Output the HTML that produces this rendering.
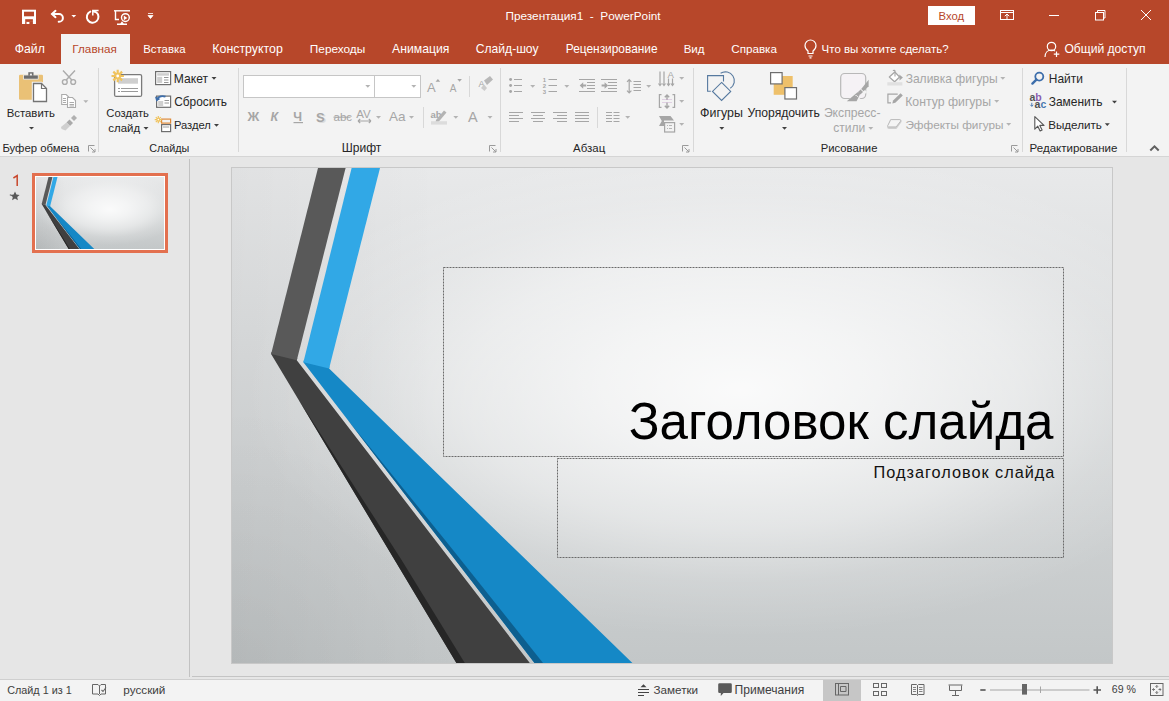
<!DOCTYPE html>
<html><head><meta charset="utf-8">
<style>
*{margin:0;padding:0;box-sizing:border-box}
html,body{width:1169px;height:701px;overflow:hidden;background:#e6e6e6;font-family:"Liberation Sans",sans-serif;font-size:12px;color:#262626}
.a{position:absolute;white-space:nowrap}
svg{position:absolute;left:0;top:0;overflow:visible}
</style></head><body>
<div class="a" style="left:0;top:0;width:1169px;height:64px;background:#b7472a"></div>
<div class="a" style="left:0;top:64px;width:1169px;height:92px;background:#f3f3f3"></div>
<div class="a" style="left:0;top:156px;width:1169px;height:1px;background:#d5d5d5"></div>
<div class="a" style="left:61px;top:34px;width:69px;height:30px;background:#f3f3f3"></div>
<div class="a" style="left:0;top:679px;width:1169px;height:1px;background:#cfcfcf"></div>
<div class="a" style="left:0;top:680px;width:1169px;height:21px;background:#f3f3f3"></div>
<div class="a" style="left:823px;top:680px;width:38px;height:21px;background:#c6c6c6"></div>
<div class="a" style="left:189px;top:159px;width:1px;height:518px;background:#c2c2c2"></div>
<div class="a" style="left:928px;top:6px;width:47px;height:19px;background:#fff"></div>
<div class="a" style="left:243px;top:75px;width:132px;height:23px;background:#fff;border:1px solid #c6c6c6"></div>
<div class="a" style="left:374px;top:75px;width:47px;height:23px;background:#fff;border:1px solid #c6c6c6"></div>
<div class="a" style="left:192px;top:676px;width:977px;height:1px;background:#c4c4c4"></div>
<svg width="1169" height="701" viewBox="0 0 1169 701">
  <defs>
    <linearGradient id="bg" gradientUnits="userSpaceOnUse" x1="0" y1="168" x2="0" y2="663">
      <stop offset="0" stop-color="#e8e9ea"/>
      <stop offset="1" stop-color="#c3c7c8"/>
    </linearGradient>
    <linearGradient id="vl" gradientUnits="userSpaceOnUse" x1="232" y1="0" x2="440" y2="0">
      <stop offset="0" stop-color="#000" stop-opacity="0.035"/>
      <stop offset="1" stop-color="#000" stop-opacity="0"/>
    </linearGradient>
    <radialGradient id="vb" gradientUnits="userSpaceOnUse" cx="232" cy="663" r="260">
      <stop offset="0" stop-color="#000" stop-opacity="0.045"/>
      <stop offset="1" stop-color="#000" stop-opacity="0"/>
    </radialGradient>
    <radialGradient id="hl" gradientUnits="userSpaceOnUse" cx="740" cy="390" r="550" gradientTransform="translate(740 390) scale(1 0.5) translate(-740 -390)">
      <stop offset="0" stop-color="#fff" stop-opacity="0.88"/>
      <stop offset="0.25" stop-color="#fff" stop-opacity="0.7"/>
      <stop offset="0.5" stop-color="#fff" stop-opacity="0.45"/>
      <stop offset="0.7" stop-color="#fff" stop-opacity="0.15"/>
      <stop offset="0.9" stop-color="#fff" stop-opacity="0"/>
    </radialGradient>
    <g id="sl">
      <rect x="232" y="168" width="880" height="495" fill="url(#bg)"/>
      <rect x="232" y="168" width="880" height="495" fill="url(#vl)"/>
      <rect x="232" y="168" width="880" height="495" fill="url(#vb)"/>
      <rect x="232" y="168" width="880" height="495" fill="url(#hl)"/>
      
      <polygon points="271.6,351.9 297.3,358.2 296.8,360.2 529.8,663 456.4,663 271.1,353.9" fill="#404040"/>
      <polygon points="298.8,400 401.6,560 464.8,663 456.4,663" fill="#262626"/>
      <polygon points="318,168 345.6,168 296.8,360.2 271.1,353.9" fill="#595959"/>
      <polygon points="303.9,360.2 329.6,366.5 329.1,368.5 632.4,663 534.5,663 303.4,362.2" fill="#1588c6"/>
      <polygon points="347.8,420 445,540 543,663 534.5,663" fill="#0d5f8f"/>
      <polygon points="351.6,168 380,168 329.1,368.5 303.4,362.2" fill="#31a8e6"/>
    </g>
  </defs>
  <rect x="231" y="167" width="882" height="497" fill="#c8c8c8"/>
  <use href="#sl"/>
  <g fill="none" stroke="#6a6a6a" stroke-width="1" stroke-dasharray="2 1">
    <rect x="443.5" y="267.5" width="620" height="189"/>
    <rect x="557.5" y="458.5" width="506" height="99"/>
  </g>
  <!-- thumbnail -->
  <rect x="33.5" y="174.5" width="133" height="77" fill="none" stroke="#e3704f" stroke-width="3"/>
  <rect x="35.5" y="176.5" width="129" height="73" fill="none" stroke="#fff" stroke-width="1"/>
  <use href="#sl" transform="translate(36 177) scale(0.145454) translate(-232 -168)"/>
</svg>
<svg width="1169" height="701" viewBox="0 0 1169 701">
<!-- ===== Title bar QAT ===== -->
<rect x="22" y="9.7" width="14" height="14.3" fill="#fff"/>
<rect x="24" y="11.7" width="10" height="4.6" fill="#b7472a"/>
<rect x="25.2" y="19.2" width="7.7" height="2.7" fill="#b7472a"/>
<rect x="25.2" y="21.9" width="1.3" height="2.1" fill="#b7472a"/>
<rect x="29.4" y="21.9" width="3.5" height="2.1" fill="#b7472a"/>
<g fill="none" stroke="#fff" stroke-width="2" stroke-linecap="round">
  <path d="M52.5 14h6.5a3.9 3.9 0 0 1 0 7.8h-0.3"/>
  <path d="M55.5 10.8 52 14 55.5 17.2"/>
  <path d="M90.3 11.6A5.8 5.8 0 1 0 96.2 12.3L93.4 11.2"/>
</g>
<path d="M71.4 15h4.8l-2.4 2.6z" fill="#fff"/>
<g fill="none" stroke="#fff" stroke-width="1.4">
  <path d="M114 10.8h16"/>
  <path d="M115.5 11v8.5h3.5"/>
  <circle cx="125.4" cy="17.6" r="3.9"/>
  <path d="M117 24.3h10M120.5 24.3l1.5-2 1.5 2"/>
</g>
<path d="M123.8 15.6v4.6l3.5-2.3z" fill="#fff"/>
<path d="M98.6 10.6H92.8V15.4" fill="none" stroke="#fff" stroke-width="1.5"/>
<path d="M148 13.5h5M148 15.5h5l-2.5 3z" fill="#fff" stroke="#fff" stroke-width="0.8"/>
<!-- window controls -->
<g fill="none" stroke="#fff" stroke-width="1">
  <rect x="1000.5" y="10.5" width="13" height="9"/>
  <path d="M1000.5 12.5h13"/>
  <path d="M1007 19.5v-5.5M1004.8 16.2l2.2-2.2 2.2 2.2"/>
  <path d="M1049 15.5h10"/>
  <rect x="1095.5" y="12.5" width="8" height="7.5"/>
  <path d="M1097.5 12.5v-2h7.5v7.5h-1.5"/>
  <path d="M1141 10l10 10M1151 10l-10 10"/>
</g>
<!-- bulb -->
<g fill="none" stroke="#fff" stroke-width="1.2">
  <path d="M808 53.5v-2.5c-1.8-1.3-3-3.3-3-5.5a5.5 5.5 0 0 1 11 0c0 2.2-1.2 4.2-3 5.5v2.5z"/>
  <path d="M808.5 56h4M809.5 57.8h2"/>
</g>
<!-- person -->
<g fill="none" stroke="#fff" stroke-width="1.2">
  <circle cx="1051.5" cy="46.5" r="4.2"/>
  <path d="M1045 57c0-4.5 2.8-7 6.5-7 1.4 0 2.6 .4 3.5 1"/>
  <path d="M1056.5 51.5v5.5M1053.8 54.2h5.5"/>
</g>

<!-- ===== Ribbon separators ===== -->
<g fill="#d8d8d8">
  <rect x="98" y="68" width="1" height="84"/>
  <rect x="238" y="68" width="1" height="84"/>
  <rect x="500" y="68" width="1" height="84"/>
  <rect x="693" y="68" width="1" height="84"/>
  <rect x="1022" y="68" width="1" height="84"/>
  <rect x="1126" y="68" width="1" height="84"/>
  <rect x="469" y="76" width="1" height="21"/>
  <rect x="423" y="107" width="1" height="21"/>
  <rect x="597" y="107" width="1" height="21"/>
</g>
<!-- dropdown arrows (dark) -->
<g fill="#404040">
  <path d="M29 127h5l-2.5 2.6z"/>
  <path d="M143.5 127h5l-2.5 2.8z"/>
  <path d="M211.5 77h5l-2.5 2.8z"/>
  <path d="M214 124h5l-2.5 2.8z"/>
  <path d="M719.3 127h5l-2.5 2.8z"/>
  <path d="M782 127h5l-2.5 2.8z"/>
  <path d="M1112 100.8h5l-2.5 2.6z"/>
  <path d="M1104.8 123.3h5l-2.5 2.6z"/>
</g>
<!-- dropdown arrows (disabled) -->
<g fill="#b3b3b3">
  <path d="M83.3 100.3h5l-2.5 2.8z"/>
  <path d="M365.3 85h5l-2.5 2.8z"/>
  <path d="M411.3 85h5l-2.5 2.8z"/>
  <path d="M376 116h5l-2.5 2.8z"/>
  <path d="M409 116h5l-2.5 2.8z"/>
  <path d="M453.3 116h5l-2.5 2.8z"/>
  <path d="M487.5 116h5l-2.5 2.8z"/>
  <path d="M530.2 85h5l-2.5 2.8z"/>
  <path d="M564.3 85h5l-2.5 2.8z"/>
  <path d="M646.2 85h5l-2.5 2.8z"/>
  <path d="M625.2 116h5l-2.5 2.8z"/>
  <path d="M679.2 77h5l-2.5 2.8z"/>
  <path d="M679.2 100h5l-2.5 2.8z"/>
  <path d="M679.2 123h5l-2.5 2.8z"/>
  <path d="M868.3 127h5l-2.5 2.8z"/>
  <path d="M1000.3 77h5l-2.5 2.8z"/>
  <path d="M994.2 100h5l-2.5 2.8z"/>
  <path d="M1006.2 123h5l-2.5 2.8z"/>
</g>
<!-- launchers -->
<g fill="none" stroke="#9a9a9a" stroke-width="1">
  <path d="M88.5 151.5v-6h6"/><path d="M90.5 147.5l4.5 4.5M95 149v3h-3"/>
  <path d="M489.5 151.5v-6h6"/><path d="M491.5 147.5l4.5 4.5M496 149v3h-3"/>
  <path d="M682.5 151.5v-6h6"/><path d="M684.5 147.5l4.5 4.5M689 149v3h-3"/>
  <path d="M1011.5 151.5v-6h6"/><path d="M1013.5 147.5l4.5 4.5M1018 149v3h-3"/>
</g>
<!-- collapse ^ -->
<path d="M1150.3 150.5l4.2-4.2 4.2 4.2" fill="none" stroke="#606060" stroke-width="2"/>

<!-- ===== Clipboard ===== -->
<rect x="19" y="74.8" width="24" height="25" rx="1.2" fill="#eac176"/>
<path d="M23.5 75h14.8v4.2H23.5z" fill="#6d6d6d" stroke="#f3f3f3" stroke-width="0.8"/>
<path d="M28.3 72.2h5.2v3.5h-5.2z" fill="#6d6d6d"/>
<rect x="29.9" y="73.6" width="2" height="1.8" fill="#f3f3f3"/>
<path d="M32.8 82.8h8.8l5.7 5.4v13.9H32.8z" fill="#fff" stroke="#f3f3f3" stroke-width="2"/>
<path d="M33.5 83.5h8l5 5v13H33.5z" fill="#fff" stroke="#737373" stroke-width="1.3"/>
<path d="M41.5 83.5v5h5" fill="none" stroke="#737373" stroke-width="1.2"/>
<!-- scissors -->
<g fill="none" stroke="#ababab" stroke-width="1.4">
  <circle cx="64.8" cy="82" r="2.4"/>
  <circle cx="73.2" cy="82" r="2.4"/>
  <path d="M66.2 80 75 70.5M71.8 80 63 70.5"/>
</g>
<!-- copy -->
<g fill="#fff" stroke="#ababab" stroke-width="1.1">
  <path d="M61.7 94.5h4.5l2.5 2.5v7.5h-7z"/>
  <path d="M67.5 97.5h5l3 3v7h-8z"/>
</g>
<g stroke="#ababab" stroke-width="1">
  <path d="M63 98.5h3M63 100.5h3M63 102.5h3M69.5 102.5h4.5M69.5 104.5h4.5M69.5 106h4.5"/>
</g>
<!-- format painter -->
<path d="M71 118l3-3 3 3-3 3z" fill="#b0b0b0"/>
<path d="M69.5 119.5l3.5 3.5-3 3-3.5-3.5z" fill="#aaaaaa"/>
<path d="M66.5 122.5l3.5 3.5-4.5 4.5-4-1.5-0.5-2z" fill="#cfcfcf"/>

<!-- ===== Slides ===== -->
<rect x="114.6" y="74.6" width="27" height="21.8" rx="1.5" fill="#fff" stroke="#7a7a7a" stroke-width="1.3"/>
<rect x="118" y="78.2" width="20" height="5.5" fill="#cfcfcf"/>
<g stroke="#9a9a9a" stroke-width="1"><path d="M118 88.5h2M121 88.5h17M118 91.5h2M121 91.5h17"/></g>
<g transform="translate(117.7 76)">
  <g stroke="#f0c35c" stroke-width="2.2" stroke-linecap="butt">
    <path d="M0 -6.2V6.2M-6.2 0H6.2M-4.4 -4.4L4.4 4.4M-4.4 4.4L4.4 -4.4"/>
  </g>
  <circle r="3" fill="#f0c35c"/>
  <circle r="1.4" fill="#fff"/>
</g>
<!-- layout -->
<rect x="155.6" y="71.6" width="15" height="13" fill="#fff" stroke="#6e6e6e" stroke-width="1.2"/>
<rect x="157.2" y="73.2" width="11.8" height="2.5" fill="#cfcfcf"/>
<rect x="157.2" y="76.8" width="5" height="6.2" fill="#cfcfcf"/>
<g stroke="#8a8a8a" stroke-width="0.9"><path d="M164 77.5h4.5M164 80h4.5M164 82.5h4.5"/></g>
<!-- reset -->
<rect x="156.6" y="96.1" width="14" height="11.2" fill="#fff" stroke="#6e6e6e" stroke-width="1.2"/>
<rect x="158.2" y="101" width="5" height="5" fill="#cfcfcf"/>
<g stroke="#8a8a8a" stroke-width="0.9"><path d="M164.5 100.5h4.5M164.5 103h4.5"/></g>
<path d="M157 99.5c1.5-3 5-4.2 8.5-2.8" fill="none" stroke="#3d6eab" stroke-width="1.8"/>
<path d="M155 96.5l1.3 5 4-2.5z" fill="#3d6eab"/>
<!-- section -->
<rect x="161.6" y="119.1" width="9" height="4" fill="none" stroke="#de8a3a" stroke-width="1.2"/>
<rect x="161.6" y="124.6" width="9" height="7" fill="#fff" stroke="#6e6e6e" stroke-width="1.2"/>
<rect x="163" y="126" width="6.2" height="2" fill="#cfcfcf"/>
<g transform="translate(158.3 119.6)">
  <g stroke="#f0c35c" stroke-width="1.2"><path d="M0 -3.6V3.6M-3.6 0H3.6M-2.5 -2.5L2.5 2.5M-2.5 2.5L2.5 -2.5"/></g>
  <circle r="1.6" fill="#f0c35c"/><circle r="0.8" fill="#fff"/>
</g>

<!-- ===== Font ===== -->

<g font-family="Liberation Sans" fill="#a6a6a6">
  <text x="247.5" y="121.2" font-size="13" font-weight="bold">Ж</text>
  <text x="270.5" y="121.2" font-size="12.5" font-weight="bold" font-style="italic">К</text>
  <text x="293.2" y="120.8" font-size="12.5" font-weight="bold">Ч</text>
  <text x="317.5" y="122.5" font-size="13" font-weight="bold" fill="#dcdcdc">S</text>
  <text x="316" y="121.5" font-size="13" font-weight="bold">S</text>
  <text x="333.5" y="121.2" font-size="11.5">abc</text>
  <text x="356.2" y="117.5" font-size="11.5">AV</text>
  <text x="389" y="121.2" font-size="13.5">Aa</text>
  <text x="427" y="91.6" font-size="13">A</text>
  <text x="449.8" y="91.6" font-size="10">A</text>
  <text x="468" y="121.8" font-size="14.5">A</text>
  <text x="478.5" y="87" font-size="9">A</text>
  <text x="430.5" y="117.5" font-size="9.5" font-weight="bold">ab</text>
</g>
<path d="M293.5 122.6h9.5" stroke="#a6a6a6" stroke-width="1.2"/>
<path d="M333.5 117.2h17" stroke="#a6a6a6" stroke-width="1"/>
<path d="M358 121h13M358 121l2.2-2M358 121l2.2 2M371 121l-2.2-2M371 121l-2.2 2" stroke="#a6a6a6" stroke-width="1.1" fill="none"/>
<path d="M435.6 81.7l2.3-2.7 2.3 2.7z" fill="#a6a6a6"/>
<path d="M457.3 79h4.6l-2.3 2.7z" fill="#a6a6a6"/>
<path d="M484 80.5l6-4.5 3 3.5-6 5.5z" fill="#b8b8b8"/>
<path d="M481 88l3-3.5 3 3.5-2.5 3z" fill="#cccccc"/>
<path d="M436 120l8-9.5 2.5 2-8 9.5-3 .8z" fill="#b3b3b3"/>
<rect x="431" y="121.2" width="16" height="3.4" fill="#dcdcdc"/>

<!-- ===== Paragraph ===== -->
<g fill="#a6a6a6">
  <circle cx="510.6" cy="79.5" r="1.45"/><circle cx="510.6" cy="85.5" r="1.45"/><circle cx="510.6" cy="91.5" r="1.45"/>
</g>
<g stroke="#a6a6a6" stroke-width="1" fill="none">
  <path d="M514 79.5h8M514 85.5h8M514 91.5h8"/>
  <path d="M548.5 79.5h8.5M548.5 85.5h8.5M548.5 91.5h8.5"/>
  <!-- decrease indent -->
  <path d="M579 79.5h16M587 82.5h8M587 85.5h8M587 88.5h8M579 91.5h16"/>
  <!-- increase indent -->
  <path d="M601 79.5h16M608 82.5h9M608 85.5h9M608 88.5h9M601 91.5h16"/>
  <!-- line spacing -->
  <path d="M633.5 81.5h7.5M633.5 84.5h7.5M633.5 87.5h7.5M633.5 90.5h7.5"/>
  <path d="M629.2 79.5v13.5M627 81.8l2.2-2.3 2.2 2.3M627 90.7l2.2 2.3 2.2-2.3" stroke-width="1.2"/>
  <!-- align -->
  <path d="M509 112.5h14M509 115.5h10M509 118.5h14M509 121.5h10"/>
  <path d="M531 112.5h14M533 115.5h10M531 118.5h14M533 121.5h10"/>
  <path d="M553 112.5h14M557 115.5h10M553 118.5h14M557 121.5h10"/>
  <path d="M575 112.5h14M575 115.5h14M575 118.5h14M575 121.5h14"/>
  <!-- columns -->
  <path d="M606 112.5h6M613.5 112.5h6M606 115.5h6M613.5 115.5h6M606 118.5h6M613.5 118.5h6M606 121.5h6M613.5 121.5h6"/>

</g>
<g font-family="Liberation Sans" fill="#a6a6a6" font-size="6" font-weight="bold">
  <text x="542.8" y="82">1</text><text x="542.8" y="88">2</text><text x="542.8" y="94">3</text>
</g>
<path d="M586.2 84.6h-3v-2.3l-3.5 3.2 3.5 3.2v-2.3h3z" fill="#a6a6a6"/>
<path d="M601.6 84.6h3v-2.3l3.5 3.2-3.5 3.2v-2.3h-3z" fill="#a6a6a6"/>

<!-- ===== Drawing ===== -->
<g fill="none" stroke="#56799f" stroke-width="1.1">
  <path d="M720.6 73.3A7.9 7.9 0 0 1 730.3 88.3"/>
  <path d="M710.8 91.3H707.6V75.6H723.5V81.6"/>
  <path d="M721.6 82.4L730.7 91.4L721.6 100.4L712.5 91.4Z"/>
</g>
<!-- arrange -->
<rect x="773.7" y="76" width="19" height="18.8" fill="#eec06a"/>
<rect x="770.6" y="72.6" width="11.5" height="11.3" fill="#fff" stroke="#6e6e6e" stroke-width="1.2"/>
<rect x="784.9" y="87.6" width="11.6" height="11.4" fill="#fff" stroke="#6e6e6e" stroke-width="1.2"/>
<!-- quick styles -->
<rect x="840.7" y="73.5" width="25" height="25" rx="4" fill="#f5f2f5" stroke="#b8b8b8" stroke-width="1.2"/>
<path d="M855 92.5l5.5 5.5-4 4h-9.5z" fill="#f3f3f3"/>
<path d="M863 88l4 4 -3 3-4-4z" fill="#f3f3f3"/>
<path d="M868.6 79.8v6.5l-5 5-2.4-2.4z" fill="#a6a6a6"/>
<path d="M860.6 89.5l2.4 2.4-2.6 2.6-2.4-2.4z" fill="#a6a6a6"/>
<path d="M857.2 92.6c1.4-.6 2.6 0 3 1.2l-3.6 7.5h-9.8z" fill="#a6a6a6"/>
<path d="M855.5 95.5c1-.2 2 .4 2.2 1.4" fill="none" stroke="#f3f3f3" stroke-width="1"/>
<!-- shape fill / outline / effects -->
<path d="M889.3 77l5.5-5 4.8 5-5 4.7z" fill="#fff" stroke="#a6a6a6" stroke-width="1.2" stroke-linejoin="round"/>
<path d="M895 76.5v-5.5c0-1-1.8-1-1.8 0" fill="none" stroke="#a6a6a6" stroke-width="1.1"/>
<path d="M899.3 74.6l3.6 2.8-3.3 3.1z" fill="#a6a6a6"/>
<rect x="887.3" y="82.2" width="15.1" height="3.3" fill="#e0e0e0"/>
<path d="M897.7 94.1H887.9V102.8H891" fill="none" stroke="#a6a6a6" stroke-width="1.2"/>
<path d="M892.3 103.6l0.8-3 7.5-7.3 2.2 2.2-7.5 7.3z" fill="#a6a6a6"/>
<path d="M891 119h8.5c1.5 0 2.5 1.5 2 3l-4.5 6.3c-.4.6-1 .8-1.6.8h-6.3c-1.5 0-2.3-1.4-1.8-2.5l2.6-6.5c.3-.7.7-1.1 1.1-1.1z" fill="#cfcfcf"/>
<path d="M891.2 119.6h8.2c1 0 1.5 1 1 1.8l-4.2 5.5h-7.8c-.6 0-1-.6-.7-1.2l2.6-5.1c.2-.6.5-1 .9-1z" fill="#f4f4f4" stroke="#b5b5b5" stroke-width="0.9"/>
<!-- ===== Editing ===== -->
<circle cx="1039.3" cy="76.6" r="4" fill="none" stroke="#3d6eab" stroke-width="1.8"/>
<path d="M1036.4 79.6l-4 4" stroke="#3d6eab" stroke-width="2.4" stroke-linecap="round"/>
<g font-family="Liberation Sans" font-size="10.5" font-weight="bold">
  <text x="1029.6" y="100.9" fill="#555555">a</text>
  <text x="1035.2" y="100.9" fill="#8a5cb0">b</text>
  <text x="1034.6" y="107.9" fill="#505050">a</text>
  <text x="1040.5" y="107.9" fill="#4a7ab0">c</text>
</g>
<path d="M1031.8 102.8v3.5M1030.3 104.8l1.5 1.5 1.5-1.5" fill="none" stroke="#3d6eab" stroke-width="0.9"/>
<path d="M1034.8 116.7v12.5l3-3 2.3 4.8 2-1-2.3-4.6h4.2z" fill="#fff" stroke="#555" stroke-width="1.1" stroke-linejoin="round"/>

<!-- ===== Status bar ===== -->
<g fill="none" stroke="#666" stroke-width="1">
  <path d="M92.5 684.5h5.5l1.5 1.5 1.5-1.5h4.5v9.5h-4.5l-1.5 1.5-1.5-1.5h-5.5z"/>
  <path d="M99.5 686v8"/>
  <path d="M101.5 690l1.5 1.5 3-4" stroke-width="1.1"/>
</g>
<g stroke="#444" stroke-width="1" fill="none">
  <path d="M638 689.5h11M638 692.5h11M638 695.5h6"/>
</g>
<path d="M640.5 687.3l3-3 3 3z" fill="#444"/>
<path d="M719.5 683.3h11a1.3 1.3 0 0 1 1.3 1.3v7.2a1.3 1.3 0 0 1-1.3 1.3h-7l-2.7 3v-3h-1.3a1.3 1.3 0 0 1-1.3-1.3v-7.2a1.3 1.3 0 0 1 1.3-1.3z" fill="#5a5a5a"/>
<g fill="none" stroke="#666" stroke-width="1">
  <rect x="835.5" y="683.5" width="13" height="11.5"/>
  <path d="M838.5 684v11M840.5 686.5h5.5v5h-5.5z"/>
  <rect x="873.5" y="683.5" width="5" height="4"/><rect x="881.5" y="683.5" width="5" height="4"/>
  <rect x="873.5" y="691.5" width="5" height="4"/><rect x="881.5" y="691.5" width="5" height="4"/>
  <path d="M911.5 684.5h5l1 1 1-1h5.5v10h-5.5l-1 1-1-1h-5z"/>
  <path d="M917.5 685.5v9"/>
  <path d="M913 687.5h3M913 689.5h3M913 691.5h3M919 687.5h3.5M919 689.5h3.5M919 691.5h3.5" stroke-width="0.8"/>
  <path d="M948.5 685h14M949.5 685.5v5h12v-5M955.5 690.5v5M952 695.5h7"/>
</g>
<rect x="980.3" y="689.2" width="5.3" height="1.6" fill="#555"/>
<rect x="990" y="689.5" width="99.5" height="1" fill="#a6a6a6"/>
<rect x="1040" y="686.5" width="1" height="6.5" fill="#a6a6a6"/>
<rect x="1022" y="684" width="5" height="10.6" fill="#666"/>
<path d="M1093.5 690h7.5M1097.2 686.3v7.5" stroke="#555" stroke-width="1.6"/>
<g fill="none" stroke="#666" stroke-width="1">
  <rect x="1150.5" y="683.5" width="12.5" height="12"/>
  <path d="M1156.8 685.5v2.5M1155.5 686.8l1.3-1.3 1.3 1.3M1156.8 693.5v-2.5M1155.5 692.2l1.3 1.3 1.3-1.3M1152.5 689.5h2.5M1153.8 688.2l-1.3 1.3 1.3 1.3M1161 689.5h-2.5M1159.7 688.2l1.3 1.3-1.3 1.3" stroke-width="0.9"/>
</g>
<!-- thumbnail number + star -->
<path d="M17.2 186V175.6l-3.8 2.4" fill="none" stroke="#c8472c" stroke-width="1.5"/>
<path d="M15 191.5l1.4 3 3.2.4-2.4 2.1.7 3.2-2.9-1.7-2.9 1.7.7-3.2-2.4-2.1 3.2-.4z" fill="#595959"/>
<rect x="9.8" y="194.5" width="1.4" height="1" fill="#595959"/>

<!-- text direction / align text / smartart -->
<g stroke="#a6a6a6" stroke-width="1.2" fill="none">
  <path d="M660 71.5v13.5M664 71.5v13.5M668.5 78.5v6.5M672.5 78.5v6.5"/>
  <path d="M658.5 83.5l1.5 2 1.5-2M662.5 83.5l1.5 2 1.5-2M667 83.5l1.5 2 1.5-2M671 83.5l1.5 2 1.5-2"/>
  <path d="M661.5 94.6h-2.1v12.8h2.1M672.5 94.6h2.1v12.8h-2.1"/>
  <path d="M667 95v5M664.8 97.3l2.2-2.3 2.2 2.3M667 102.5v5.5M664.8 105.7l2.2 2.3 2.2-2.3" stroke-width="1.4"/>
  <rect x="664.6" y="122.6" width="10" height="9.4"/>
</g>
<text x="667.6" y="77.6" font-family="Liberation Sans" font-size="9.6" fill="#a6a6a6">A</text>
<g stroke="#c8a8d0" stroke-width="0.9" stroke-dasharray="1 1"><path d="M662.5 99.5h9M662.5 102.5h9"/></g>
<path d="M659 116h11.5l3.5 4.5h-10v5.5h-5l2.8-5z" fill="#a6a6a6"/>
<g stroke="#b0b0b0" stroke-width="0.9"><path d="M667 125.5h1M669 125.5h3M667 128.5h1M669 128.5h3"/></g>
</svg>
<div class="a" style="left:505.46px;top:11.11px;font-size:11.81px;line-height:11.81px;color:#ffffff;font-weight:normal;">Презентация1  -  PowerPoint</div>
<div class="a" style="left:938.60px;top:10.94px;font-size:11.30px;line-height:11.30px;color:#b7472a;font-weight:normal;">Вход</div>
<div class="a" style="left:14.69px;top:42.84px;font-size:12.24px;line-height:12.24px;color:#ffffff;font-weight:normal;">Файл</div>
<div class="a" style="left:72.36px;top:43.29px;font-size:11.71px;line-height:11.71px;color:#b7472a;font-weight:normal;">Главная</div>
<div class="a" style="left:143.19px;top:43.55px;font-size:11.40px;line-height:11.40px;color:#ffffff;font-weight:normal;">Вставка</div>
<div class="a" style="left:212.31px;top:42.71px;font-size:12.39px;line-height:12.39px;color:#ffffff;font-weight:normal;">Конструктор</div>
<div class="a" style="left:309.85px;top:44.19px;font-size:11.82px;line-height:11.82px;color:#ffffff;font-weight:normal;">Переходы</div>
<div class="a" style="left:392.10px;top:42.88px;font-size:12.20px;line-height:12.20px;color:#ffffff;font-weight:normal;">Анимация</div>
<div class="a" style="left:475.80px;top:42.96px;font-size:12.10px;line-height:12.10px;color:#ffffff;font-weight:normal;">Слайд-шоу</div>
<div class="a" style="left:565.85px;top:44.14px;font-size:11.89px;line-height:11.89px;color:#ffffff;font-weight:normal;">Рецензирование</div>
<div class="a" style="left:683.68px;top:44.43px;font-size:11.54px;line-height:11.54px;color:#ffffff;font-weight:normal;">Вид</div>
<div class="a" style="left:731.22px;top:43.33px;font-size:11.66px;line-height:11.66px;color:#ffffff;font-weight:normal;">Справка</div>
<div class="a" style="left:821.60px;top:44.47px;font-size:11.49px;line-height:11.49px;color:#ffffff;font-weight:normal;">Что вы хотите сделать?</div>
<div class="a" style="left:1064.42px;top:42.95px;font-size:12.10px;line-height:12.10px;color:#ffffff;font-weight:normal;">Общий доступ</div>
<div class="a" style="left:6.69px;top:108.16px;font-size:11.39px;line-height:11.39px;color:#262626;font-weight:normal;">Вставить</div>
<div class="a" style="left:2.39px;top:143.11px;font-size:11.33px;line-height:11.33px;color:#262626;font-weight:normal;">Буфер обмена</div>
<div class="a" style="left:106.34px;top:108.41px;font-size:11.22px;line-height:11.22px;color:#262626;font-weight:normal;">Создать</div>
<div class="a" style="left:108.34px;top:122.52px;font-size:11.44px;line-height:11.44px;color:#262626;font-weight:normal;">слайд</div>
<div class="a" style="left:173.83px;top:73.35px;font-size:12.11px;line-height:12.11px;color:#262626;font-weight:normal;">Макет</div>
<div class="a" style="left:174.21px;top:96.63px;font-size:11.90px;line-height:11.90px;color:#262626;font-weight:normal;">Сбросить</div>
<div class="a" style="left:173.90px;top:119.52px;font-size:11.20px;line-height:11.20px;color:#262626;font-weight:normal;">Раздел</div>
<div class="a" style="left:149.26px;top:142.59px;font-size:10.77px;line-height:10.77px;color:#262626;font-weight:normal;">Слайды</div>
<div class="a" style="left:341.74px;top:141.50px;font-size:12.05px;line-height:12.05px;color:#262626;font-weight:normal;">Шрифт</div>
<div class="a" style="left:573.10px;top:143.00px;font-size:11.46px;line-height:11.46px;color:#262626;font-weight:normal;">Абзац</div>
<div class="a" style="left:700.08px;top:106.50px;font-size:12.41px;line-height:12.41px;color:#262626;font-weight:normal;">Фигуры</div>
<div class="a" style="left:747.56px;top:106.69px;font-size:12.17px;line-height:12.17px;color:#262626;font-weight:normal;">Упорядочить</div>
<div class="a" style="left:823.89px;top:106.70px;font-size:12.17px;line-height:12.17px;color:#a6a6a6;font-weight:normal;">Экспресс-</div>
<div class="a" style="left:833.22px;top:121.98px;font-size:12.08px;line-height:12.08px;color:#a6a6a6;font-weight:normal;">стили</div>
<div class="a" style="left:820.80px;top:143.19px;font-size:11.24px;line-height:11.24px;color:#262626;font-weight:normal;">Рисование</div>
<div class="a" style="left:905.64px;top:72.60px;font-size:12.05px;line-height:12.05px;color:#a6a6a6;font-weight:normal;">Заливка фигуры</div>
<div class="a" style="left:905.22px;top:96.31px;font-size:12.27px;line-height:12.27px;color:#a6a6a6;font-weight:normal;">Контур фигуры</div>
<div class="a" style="left:905.41px;top:118.64px;font-size:11.77px;line-height:11.77px;color:#a6a6a6;font-weight:normal;">Эффекты фигуры</div>
<div class="a" style="left:1048.84px;top:73.89px;font-size:11.94px;line-height:11.94px;color:#262626;font-weight:normal;">Найти</div>
<div class="a" style="left:1048.74px;top:96.57px;font-size:11.96px;line-height:11.96px;color:#262626;font-weight:normal;">Заменить</div>
<div class="a" style="left:1048.17px;top:119.14px;font-size:11.64px;line-height:11.64px;color:#262626;font-weight:normal;">Выделить</div>
<div class="a" style="left:1029.58px;top:142.93px;font-size:11.54px;line-height:11.54px;color:#262626;font-weight:normal;">Редактирование</div>
<div class="a" style="left:7.16px;top:684.74px;font-size:10.82px;line-height:10.82px;color:#404040;font-weight:normal;">Слайд 1 из 1</div>
<div class="a" style="left:123.30px;top:683.97px;font-size:11.73px;line-height:11.73px;color:#404040;font-weight:normal;">русский</div>
<div class="a" style="left:653.45px;top:683.99px;font-size:11.70px;line-height:11.70px;color:#404040;font-weight:normal;">Заметки</div>
<div class="a" style="left:734.53px;top:683.68px;font-size:12.07px;line-height:12.07px;color:#404040;font-weight:normal;">Примечания</div>
<div class="a" style="left:1111.87px;top:684.34px;font-size:10.59px;line-height:10.59px;color:#404040;font-weight:normal;">69 %</div>
<div class="a" style="left:628.67px;top:396.46px;font-size:51.08px;line-height:51.08px;color:#000000;font-weight:normal;">Заголовок слайда</div>
<div class="a" style="left:873.60px;top:463.50px;font-size:16.30px;line-height:16.30px;color:#111111;font-weight:normal;letter-spacing:0.989px;">Подзаголовок слайда</div>
</body></html>
